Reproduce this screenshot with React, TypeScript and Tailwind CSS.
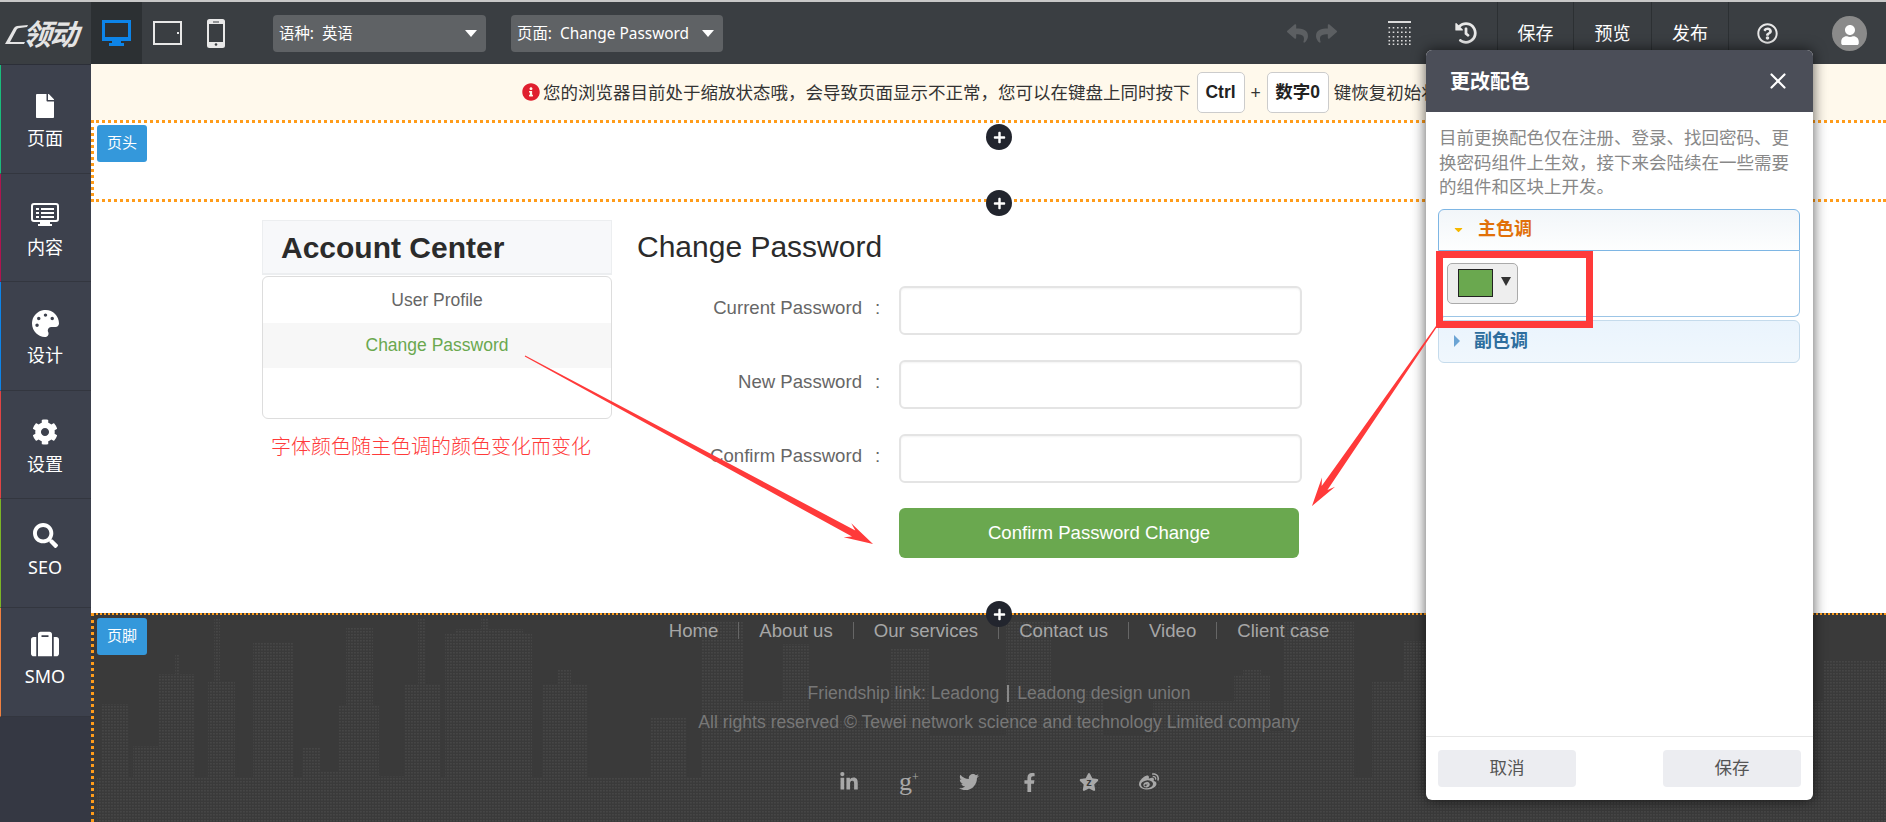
import React from "react";
import { FaFile, FaPalette, FaCog, FaSearch, FaSuitcase, FaReply, FaShare, FaHistory, FaRegQuestionCircle, FaUser, FaInfoCircle, FaLinkedinIn, FaTwitter, FaFacebookF, FaStar, FaWeibo, FaPlus, FaCaretDown } from "react-icons/fa";
import { X } from "lucide-react";

const SANS = "font-['Liberation_Sans','Noto_Sans_CJK_SC',sans-serif]";

const Desktop = () => (
  <svg width="29" height="26" viewBox="0 0 29 26"><rect x="1.5" y="1.5" width="26" height="17" fill="none" stroke="#0d84e8" strokeWidth="3" /><rect x="0" y="18" width="29" height="3" fill="#0d84e8" /><rect x="10" y="21" width="9" height="2" fill="#0d84e8" /><rect x="7" y="23" width="15" height="3" fill="#0d84e8" /></svg>
);
const Tablet = () => (
  <svg width="29" height="24" viewBox="0 0 29 24"><rect x="1" y="1" width="27" height="22" fill="none" stroke="#e8e8e8" strokeWidth="2" /><rect x="24" y="11" width="2" height="2" fill="#e8e8e8" /></svg>
);
const Phone = () => (
  <svg width="18" height="29" viewBox="0 0 18 29"><rect x="1" y="1" width="16" height="27" rx="1.5" fill="none" stroke="#e8e8e8" strokeWidth="2" /><rect x="1" y="1" width="16" height="4" fill="#e8e8e8" /><rect x="1" y="23" width="16" height="5" fill="#e8e8e8" /><circle cx="9" cy="25.5" r="1.3" fill="#3a3e42" /><rect x="6" y="2.5" width="6" height="1" fill="#3a3e42" /></svg>
);
const GridIcon = () => (
  <svg width="23" height="24" viewBox="0 0 23 24" fill="#dcdcdc">
    <rect x="0" y="0" width="23" height="2" />
    {[6, 10.5, 15, 19, 22.5].map((y) => [0.5, 4.7, 9, 13, 17, 21].map((x) => <rect key={`${x}-${y}`} x={x} y={y} width="1.6" height="1.5" />))}
  </svg>
);
const ContentIcon = () => (
  <svg width="28" height="23" viewBox="0 0 28 23" fill="#fff">
    <rect x="1" y="1" width="26" height="17" rx="2" fill="none" stroke="#fff" strokeWidth="2" />
    <rect x="9" y="18" width="10" height="3" /><rect x="7" y="21" width="14" height="2" />
    {[5, 9, 13].map((y) => <g key={y}><rect x="5" y={y} width="3" height="2" /><rect x="10" y={y} width="13" height="2" /></g>)}
  </svg>
);
const StarZ = () => (
  <span className="relative inline-flex items-center justify-center">
    <FaStar size={20} color="#a8a8a8" />
    <span className="absolute text-[11px] font-bold leading-none text-[#3a3a3a]">z</span>
  </span>
);
const GPlus = () => (
  <span className="flex items-start font-['Liberation_Serif',serif] leading-none text-[#a8a8a8]">
    <span className="text-[26px] leading-[22px]">g</span><span className="text-[12px] leading-none">+</span>
  </span>
);
const Skyline = () => {
  const b: [number, number, number][] = [
    [98, 125, 703], [130, 156, 745], [156, 192, 673], [172, 176, 653], [205, 232, 680], [211, 217, 618], [250, 290, 642], [300, 317, 747], [317, 343, 770], [343, 370, 627], [335, 376, 705],
    [370, 401, 775], [401, 437, 683], [415, 423, 618], [442, 529, 633], [478, 486, 618], [452, 520, 628], [540, 584, 683], [555, 568, 668], [584, 647, 777], [647, 683, 717], [698, 740, 620], [740, 780, 700],
    [780, 807, 643], [807, 887, 720], [887, 927, 647], [927, 1003, 735], [1003, 1048, 620], [1048, 1100, 690], [1100, 1150, 735], [1150, 1231, 700], [1231, 1267, 675], [1240, 1258, 668], [1267, 1280, 730], [1280, 1351, 620],
    [1369, 1400, 680], [1400, 1480, 640], [1480, 1560, 700], [1560, 1620, 650], [1620, 1700, 720], [1700, 1760, 640], [1760, 1820, 700], [1820, 1886, 660], [94, 1886, 777],
  ];
  return (
    <svg className="absolute left-0 top-0" width="1795" height="208" viewBox="91 614 1795 208">
      <defs><pattern id="dots" width="3" height="3" patternUnits="userSpaceOnUse"><rect width="1.8" height="1.5" fill="#464646" /></pattern></defs>
      <path d={b.map(([x1, x2, y]) => `M${x1} ${y}H${x2}V822H${x1}Z`).join("")} fill="url(#dots)" />
    </svg>
  );
};
const Arrow = ({ x1, y1, x2, y2 }: { x1: number; y1: number; x2: number; y2: number }) => {
  const l = Math.hypot(x2 - x1, y2 - y1), ux = (x2 - x1) / l, uy = (y2 - y1) / l, nx = -uy, ny = ux;
  const bx = x2 - ux * 22, by = y2 - uy * 22, hx = x2 - ux * 29, hy = y2 - uy * 29;
  const pts = [[x1 + nx * 0.5, y1 + ny * 0.5], [bx + nx * 3.5, by + ny * 3.5], [hx + nx * 8, hy + ny * 8], [x2, y2], [hx - nx * 8, hy - ny * 8], [bx - nx * 3.5, by - ny * 3.5], [x1 - nx * 0.5, y1 - ny * 0.5]];
  return <polygon points={pts.map((p) => p.join(",")).join(" ")} fill="#ff3a3a" />;
};
const Plus = ({ className }: { className: string }) => (
  <div className={`absolute z-10 flex h-[26px] w-[26px] items-center justify-center rounded-full bg-[#22252e] ${className}`}><FaPlus size={13} color="#fff" /></div>
);
const Badge = ({ children, className }: { children: React.ReactNode; className: string }) => (
  <div className={`absolute flex h-[37px] w-[50px] items-center justify-center rounded-[3px] bg-[#3498db] text-[15px] text-white ${className}`}>{children}</div>
);
const Sel = ({ label, value, w }: { label: string; value: string; w: string }) => (
  <div className={`flex h-[37px] items-center justify-between rounded-[4px] bg-[#5f6265] pl-[6px] pr-[9px] text-[15.4px] text-white ${w}`}>
    <span className="whitespace-pre pt-[2px] font-['Noto_Sans','Noto_Sans_CJK_SC',sans-serif]">{label}:  {value}</span>
    <span className="h-0 w-0 border-x-[6px] border-t-[7px] border-x-transparent border-t-white" />
  </div>
);
const Field = ({ label }: { label: string }) => (
  <div className="flex h-[49px] items-center">
    <div className="flex w-[244px] justify-end pb-[6px] text-[18.6px] text-[#666]"><span>{label}</span><span className="ml-[13px] w-[6px]">:</span></div>
    <div className="ml-[18px] h-full w-[403px] rounded-[6px] border-2 border-[#e4e4e4] bg-white shadow-[inset_0_1px_2px_rgba(0,0,0,0.05)]" />
  </div>
);

const side = [
  { t: "页面", c: "border-[#1abc7c]", m: "mt-[26px]", i: <FaFile size={24} /> },
  { t: "内容", c: "border-[#b0144f]", m: "mt-[26px]", i: <ContentIcon /> },
  { t: "设计", c: "border-[#0d84e8]", m: "mt-[26px]", i: <FaPalette size={27} /> },
  { t: "设置", c: "border-[#e04444]", m: "mt-[26px]", i: <FaCog size={26} /> },
  { t: "SEO", c: "border-[#7cb526]", m: "mt-[21px]", i: <FaSearch size={25} /> },
  { t: "SMO", c: "border-[#f08040]", m: "mt-[21px]", i: <FaSuitcase size={28} /> },
];
const nav = ["Home", "About us", "Our services", "Contact us", "Video", "Client case"];

export default function App() {
  return (
    <div className={`relative flex h-[822px] w-[1886px] flex-col overflow-hidden bg-white ${SANS}`}>
      <div className="h-[2px] bg-[#c8c8c8]" />
      {/* toolbar */}
      <header className="flex h-[62px] items-center bg-[#3a3e42] text-white">
        <div className="flex h-full w-[91px] items-center pl-[4px] pt-[4px]">
          <svg width="24" height="24" viewBox="0 0 24 24" className="shrink-0"><path d="M24 2 L13 3 Q11 3.5 10 5 L1 21 L20 21 L21 19 L6 19 L13 6 Q14 5 16 5 L23 4 Z" fill="#e4e4e4" /></svg>
          <span className="-ml-[3px] -skew-x-[18deg] whitespace-nowrap text-[29px] font-bold leading-none tracking-[-2px] text-[#e4e4e4]">领动</span>
        </div>
        <div className="flex h-full w-[51px] items-center justify-center bg-[#2c3033]"><Desktop /></div>
        <div className="flex w-[51px] justify-center"><Tablet /></div>
        <div className="ml-[3px] flex w-[40px] justify-center"><Phone /></div>
        <div className="ml-[37px]"><Sel label="语种" value="英语" w="w-[213px]" /></div>
        <div className="ml-[25px]"><Sel label="页面" value="Change Password" w="w-[212px]" /></div>
        <div className="ml-[564px] flex w-[50px] items-center justify-between text-[#5c5f62]"><FaReply size={21} /><FaShare size={21} /></div>
        <div className="ml-[51px]"><GridIcon /></div>
        <div className="ml-[44px]"><FaHistory size={22} color="#e8e8e8" /></div>
        <div className="ml-[20px] flex h-full border-l border-[#2c3033] text-[18px]">
          <div className="flex w-[76px] items-center justify-center border-r border-[#2c3033] pt-[2px]">保存</div>
          <div className="flex w-[78px] items-center justify-center border-r border-[#2c3033] pt-[2px]">预览</div>
          <div className="flex w-[77px] items-center justify-center border-r border-[#2c3033] pt-[2px]">发布</div>
        </div>
        <div className="ml-[28px]"><FaRegQuestionCircle size={21} color="#e8e8e8" /></div>
        <div className="ml-[54px] flex h-[35px] w-[35px] items-end justify-center overflow-hidden rounded-full bg-[#8a8a8a] pb-[6px]"><FaUser size={20} color="#fff" /></div>
      </header>
      <div className="flex h-[758px]">
        {/* sidebar */}
        <aside className="h-full w-[91px] border-t border-[#2c2f38] bg-[#353843] text-white">
          {side.map((s) => (
            <div key={s.t} className={`flex h-[108.6px] flex-col items-center border-b border-l border-b-[#33363f] bg-[#3d414d] pr-[2px] ${s.c}`}>
              <div className={`flex h-[30px] items-center justify-center ${s.m}`}>{s.i}</div>
              <div className="mt-[5px] text-[18px] font-['Noto_Sans','Noto_Sans_CJK_SC',sans-serif] leading-[24px]">{s.t}</div>
            </div>
          ))}
        </aside>
        <main className="relative flex w-[1795px] flex-col">
          <div className="flex h-[56px] items-center whitespace-nowrap bg-[#fff9ec] pl-[431px] text-[17.5px] text-[#333]">
            <FaInfoCircle size={18} color="#e0202f" className="mr-[3px]" />
            <span className="pt-[2px]">您的浏览器目前处于缩放状态哦，会导致页面显示不正常，您可以在键盘上同时按下</span>
            <span className="ml-[6px] flex h-[41px] w-[48px] items-center justify-center rounded-[5px] border border-[#ccc] bg-white font-bold text-[#222]">Ctrl</span>
            <span className="mx-[6px] pt-[2px]">+</span>
            <span className="flex h-[41px] w-[62px] items-center justify-center rounded-[5px] border border-[#ccc] bg-white font-bold text-[#222]">数字0</span>
            <span className="ml-[5px] pt-[2px]">键恢复初始状态</span>
          </div>
          <section className="relative h-[82px] border-[3px] border-r-0 border-dotted border-[#ff9c1a]">
            <Badge className="left-[3px] top-[2px]">页头</Badge>
          </section>
          <Plus className="left-[895px] top-[60px]" />
          <Plus className="left-[895px] top-[126px]" />
          <section className="flex h-[411px] pl-[171px] pt-[18px]">
            <div className="w-[350px]">
              <div className="flex h-[55px] items-center border border-b-2 border-[#eceef0] bg-[#f7f8fa] pl-[18px] text-[30px] font-bold text-[#2b2b2b]">Account Center</div>
              <div className="mt-[1px] h-[143px] rounded-[6px] border border-[#ddd] pt-[5px] text-center text-[17.5px]">
                <div className="flex h-[41px] items-center justify-center pb-[5px] text-[#666]">User Profile</div>
                <div className="flex h-[45px] items-center justify-center bg-[#f7f7f7] pb-[1px] text-[#6aa84f]">Change Password</div>
              </div>
              <div className="mt-[16px] pl-[9px] text-[20px] font-light leading-[24px] text-[#ff3a3a]">字体颜色随主色调的颜色变化而变化</div>
            </div>
            <div className="ml-[25px] flex flex-col">
              <h2 className="flex h-[50px] items-center pt-[2px] text-[30px] font-normal text-[#2b2b2b]">Change Password</h2>
              <div className="mt-[16px] flex flex-col gap-[25px]">
                <Field label="Current Password" />
                <Field label="New Password" />
                <Field label="Confirm Password" />
              </div>
              <div className="ml-[262px] mt-[25px] flex h-[50px] w-[400px] items-center justify-center rounded-[6px] bg-[#6aa84f] text-[18.6px] text-white">Confirm Password Change</div>
            </div>
          </section>
          <footer className="relative h-[209px] overflow-hidden border-l-[3px] border-t-2 border-dotted border-[#ff9c1a] bg-[#3a3a3a] pl-[18px]">
            <Skyline />
            <Badge className="left-[3px] top-[3px]">页脚</Badge>
            <div className="relative flex h-[32px] items-center justify-center text-[18.6px] text-[#a6a6a6]">
              {nav.map((n, i) => (
                <div key={n} className="flex items-center">
                  {i > 0 && <span className="mx-[20px] h-[17px] w-px bg-[#666]" />}
                  <span>{n}</span>
                </div>
              ))}
            </div>
            <div className="relative mt-[32px] flex h-[28px] items-center justify-center text-[17.6px] text-[#777]">
              <span>Friendship link: Leadong</span><span className="mx-[8px] h-[17px] w-[2px] bg-[#888]" /><span>Leadong design union</span>
            </div>
            <div className="relative mt-[1px] flex h-[28px] items-center justify-center text-[17.6px] text-[#777]">All rights reserved © Tewei network science and technology Limited company</div>
            <div className="relative mt-[32px] flex h-[28px] items-center justify-center text-[#a8a8a8]">
              {[<FaLinkedinIn size={20} />, <GPlus />, <FaTwitter size={20} />, <FaFacebookF size={19} />, <StarZ />, <FaWeibo size={20} />].map((ic, i) => (
                <div key={i} className="flex w-[60px] justify-center">{ic}</div>
              ))}
            </div>
          </footer>
          <Plus className="left-[895px] top-[537px]" />
        </main>
      </div>

      {/* dialog */}
      <div className="absolute left-[1426px] top-[50px] z-20 flex h-[750px] w-[387px] flex-col overflow-hidden rounded-[6px] bg-white shadow-[0_0_14px_rgba(0,0,0,0.65)]">
        <div className="flex h-[62px] items-center justify-between bg-[#4b4e58] pl-[24px] pr-[22px] text-white">
          <span className="pt-[2px] text-[20px] font-bold">更改配色</span>
          <X size={26} strokeWidth={2} color="#fff" />
        </div>
        <p className="px-[13px] pt-[14px] text-[17.5px] leading-[24.5px] text-[#888]">目前更换配色仅在注册、登录、找回密码、更换密码组件上生效，接下来会陆续在一些需要的组件和区块上开发。</p>
        <div className="mx-[12px] mt-[9px] w-[362px]">
          <div className="flex h-[42px] items-center rounded-t-[6px] border border-[#7eb6e4] bg-gradient-to-b from-[#f2f6f9] to-[#fdfefe] pl-[13px] text-[18px] font-bold text-[#e17009]">
            <FaCaretDown size={13} color="#f5b800" /><span className="ml-[13px]">主色调</span>
          </div>
          <div className="h-[66px] rounded-b-[6px] border border-t-0 border-[#9cc5e6] pl-[8px] pt-[12px]">
            <div className="flex h-[41px] w-[71px] items-center rounded-[5px] border border-[#aaa] bg-[#eee] pl-[10px]">
              <span className="h-[28px] w-[35px] border border-[#222] bg-[#6aa84f]" />
              <span className="ml-[8px] mb-[3px] h-0 w-0 border-x-[5px] border-t-[9px] border-x-transparent border-t-[#333]" />
            </div>
          </div>
          <div className="mt-[3px] flex h-[43px] items-center rounded-[6px] border border-[#c5dbec] bg-gradient-to-b from-[#eaf4fd] to-[#f0f7fd] pl-[15px] text-[18px] font-bold text-[#2e6e9e]">
            <span className="h-0 w-0 border-y-[6px] border-l-[6px] border-y-transparent border-l-[#6ba4d4]" /><span className="ml-[14px]">副色调</span>
          </div>
        </div>
        <div className="mt-auto flex h-[64px] justify-between border-t border-[#e6e6e6] px-[12px] pt-[13px]">
          <div className="flex h-[37px] w-[138px] items-center justify-center rounded-[4px] bg-[#ecedf1] text-[17.5px] text-[#555]">取消</div>
          <div className="flex h-[37px] w-[138px] items-center justify-center rounded-[4px] bg-[#ecedf1] text-[17.5px] text-[#555]">保存</div>
        </div>
      </div>

      {/* annotations */}
      <div className="absolute left-[1436px] top-[251px] z-30 h-[77px] w-[157px] border-[7px] border-[#ff3a3a]" />
      <svg className="pointer-events-none absolute left-0 top-0 z-30" width="1886" height="822">
        <Arrow x1={525} y1={356} x2={873} y2={544} />
        <Arrow x1={1443} y1={317} x2={1312} y2={506} />
      </svg>
    </div>
  );
}
